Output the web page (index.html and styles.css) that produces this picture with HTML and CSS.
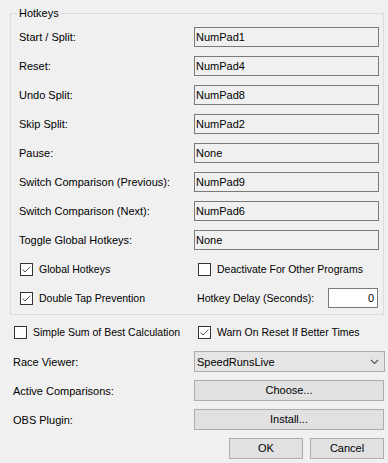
FILE: index.html
```html
<!DOCTYPE html>
<html lang="en">
<head>
    <meta charset="UTF-8">
    <title>Settings</title>
    <link rel="stylesheet" href="styles.css">
</head>
<body>
    <fieldset class="group">
        <legend>Hotkeys</legend>
        <div class="rows">
            <div class="row"><div class="label">Start / Split:</div><div class="textbox">NumPad1</div></div>
            <div class="row"><div class="label">Reset:</div><div class="textbox">NumPad4</div></div>
            <div class="row"><div class="label">Undo Split:</div><div class="textbox">NumPad8</div></div>
            <div class="row"><div class="label">Skip Split:</div><div class="textbox">NumPad2</div></div>
            <div class="row"><div class="label">Pause:</div><div class="textbox">None</div></div>
            <div class="row"><div class="label">Switch Comparison (Previous):</div><div class="textbox">NumPad9</div></div>
            <div class="row"><div class="label">Switch Comparison (Next):</div><div class="textbox">NumPad6</div></div>
            <div class="row"><div class="label">Toggle Global Hotkeys:</div><div class="textbox">None</div></div>
            <div class="row">
                <div class="check first">
                    <span class="box"><svg width="11" height="11" viewBox="0 0 11 11"><polyline points="1.5,5.5 4,8 9.5,2.5" /></svg></span>
                    Global Hotkeys
                </div>
                <div class="check">
                    <span class="box"></span>
                    Deactivate For Other Programs
                </div>
            </div>
            <div class="row">
                <div class="check first">
                    <span class="box"><svg width="11" height="11" viewBox="0 0 11 11"><polyline points="1.5,5.5 4,8 9.5,2.5" /></svg></span>
                    Double Tap Prevention
                </div>
                <div class="delay">
                    <div class="delay-label">Hotkey Delay (Seconds):</div>
                    <div class="number">0</div>
                </div>
            </div>
        </div>
    </fieldset>

    <div class="options">
        <div class="row tall">
            <div class="check first">
                <span class="box"></span>
                Simple Sum of Best Calculation
            </div>
            <div class="check">
                <span class="box"><svg width="11" height="11" viewBox="0 0 11 11"><polyline points="1.5,5.5 4,8 9.5,2.5" /></svg></span>
                Warn On Reset If Better Times
            </div>
        </div>
        <div class="row wide">
            <div class="label">Race Viewer:</div>
            <div class="combo">
                <span>SpeedRunsLive</span>
                <svg width="9" height="6" viewBox="0 0 9 6"><polyline points="1,1 4.5,4.5 8,1" /></svg>
            </div>
        </div>
        <div class="row wide">
            <div class="label">Active Comparisons:</div>
            <div class="button">Choose...</div>
        </div>
        <div class="row wide">
            <div class="label">OBS Plugin:</div>
            <div class="button">Install...</div>
        </div>
        <div class="actions">
            <div class="button small">OK</div>
            <div class="button small">Cancel</div>
        </div>
    </div>
</body>
</html>
```

FILE: styles.css
```css
body {
    margin: 0;
    width: 388px;
    height: 463px;
    overflow: hidden;
    background: #F0F0F0;
    color: #000;
    font-family: "Liberation Sans", Arial, sans-serif;
    font-size: 11px;
}

.group {
    margin: 6px 4px 0 10px;
    padding: 7px 4px 6px 8px;
    border: 1px solid #DCDCDC;
    min-width: 0;
}

.group legend {
    padding: 0 2px;
    margin-left: -2px;
    line-height: 14px;
}

.rows {
    display: flex;
    flex-direction: column;
    gap: 9px;
}

.row {
    display: grid;
    grid-template-columns: 175px 1fr;
    align-items: center;
    height: 20px;
}

.textbox {
    height: 18px;
    line-height: 18px;
    padding-left: 1px;
    border: 1px solid #7A7A7A;
    background: #F0F0F0;
}

/* check boxes draw their text a little narrower than labels */
.check {
    display: flex;
    align-items: center;
    gap: 6px;
    margin-left: 4px;
    font-size: 10.5px;
}

.check.first {
    margin-left: 1px;
}

.box {
    width: 11px;
    height: 11px;
    border: 1px solid #333;
    background: #FFF;
    display: flex;
}

.box polyline {
    fill: none;
    stroke: #555;
    stroke-width: 1;
}

.delay {
    display: flex;
    align-items: center;
    justify-content: space-between;
    padding-left: 3px;
    margin-right: 1px;
}

.delay-label {
    font-size: 10.6px;
}

.number {
    width: 45px;
    height: 18px;
    line-height: 18px;
    padding-right: 3px;
    text-align: right;
    border: 1px solid #7A7A7A;
    background: #FFF;
}

.options {
    display: flex;
    flex-direction: column;
    gap: 8px;
    padding: 6px 4px 0 13px;
}

.options .row {
    grid-template-columns: 181px 1fr;
    height: 21px;
}

.options .row.tall {
    height: 22px;
}

.combo {
    height: 19px;
    margin-right: -1px;
    padding: 0 5px 0 2px;
    display: flex;
    align-items: center;
    justify-content: space-between;
    border: 1px solid #ADADAD;
    background: #E5E5E5;
}

.combo polyline {
    fill: none;
    stroke: #555;
    stroke-width: 1.2;
}

.button {
    height: 19px;
    line-height: 19px;
    text-align: center;
    border: 1px solid #ADADAD;
    background: #E1E1E1;
}

.actions {
    display: flex;
    justify-content: flex-end;
    gap: 7px;
}

.button.small {
    width: 72px;
}
```
